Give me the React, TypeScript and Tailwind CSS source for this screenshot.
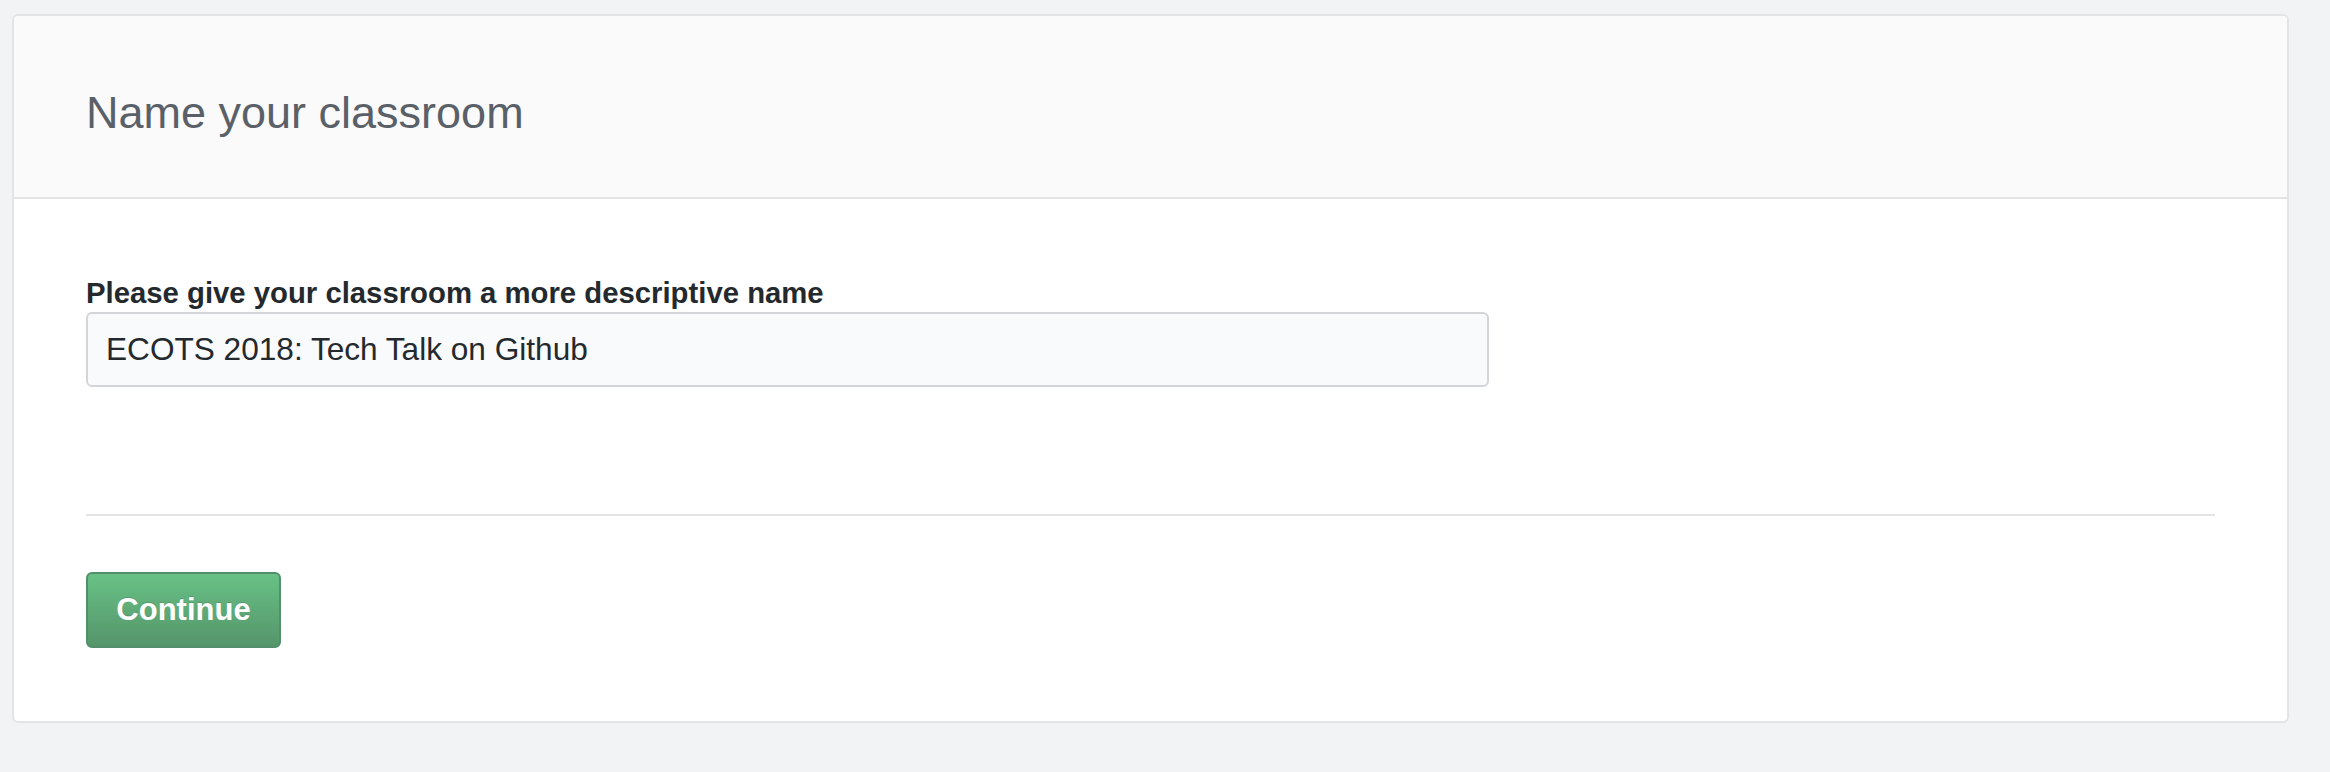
import React from 'react';

const App: React.FC = () => {
  return (
    <div className="min-h-screen bg-[#f2f3f5] pt-[14px] pl-[12px] pr-[41px] pb-[52px] font-['Liberation_Sans',Arial,sans-serif]">
      <div className="bg-white border-2 border-[#e3e4e6] rounded-[6px] overflow-hidden">
        {/* Header */}
        <div className="bg-[#fafafa] border-b-2 border-[#e3e4e6] h-[183px] pt-[75px] px-[72px]">
          <h1 className="text-[45px] leading-[44px] text-[#5a6068] font-normal">Name your classroom</h1>
        </div>

        {/* Body */}
        <div className="px-[72px] pt-[79px] pb-[73px]">
          <label className="block text-[29.3px] leading-[29px] font-bold text-[#24292e]">
            Please give your classroom a more descriptive name
          </label>
          <input
            type="text"
            defaultValue="ECOTS 2018: Tech Talk on Github"
            className="mt-[5px] block w-[1403px] h-[75px] px-[18px] bg-[#f9fafb] border-2 border-[#d3d5d9] rounded-[6px] text-[31.6px] text-[#24292e] outline-none font-['Liberation_Sans',Arial,sans-serif]"
          />

          <div className="mt-[127px] h-[2px] bg-[#e3e4e6]" />

          <button
            type="button"
            className="mt-[56px] w-[195px] h-[76px] flex items-center justify-center rounded-[6px] border-2 border-[#51906a] bg-gradient-to-b from-[#68c186] to-[#55956a] text-white text-[31px] font-bold [text-shadow:0_-1px_0_rgba(0,0,0,0.15)]"
          >
            Continue
          </button>
        </div>
      </div>
    </div>
  );
};

export default App;
